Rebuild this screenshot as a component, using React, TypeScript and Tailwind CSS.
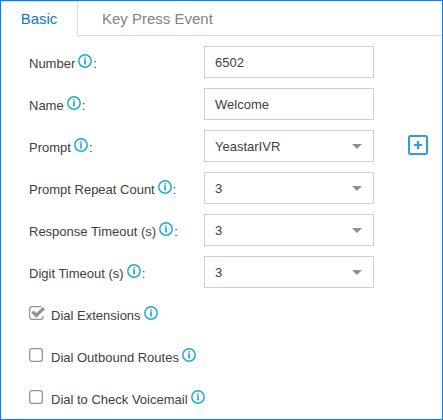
import React from "react";

function InfoIcon() {
  return (
    <svg className="mb-[2px] ml-[3px] h-[14px] w-[14px] shrink-0" viewBox="0 0 14 14" fill="none">
      <circle cx="7" cy="7" r="6.2" stroke="#22a9d6" strokeWidth="1.5" />
      <path d="M7 3.2v1.3M7 5.2v5.3" stroke="#22a9d6" strokeWidth="1.7" />
    </svg>
  );
}

type FieldProps = { label: string; value: string; select?: boolean; addable?: boolean };

function Field({ label, value, select, addable }: FieldProps) {
  return (
    <div className="flex h-8 items-center">
      <div className="flex w-[175px] shrink-0 items-center">
        <span className="pt-[3px]">{label}</span>
        <InfoIcon />
        <span className="ml-px pt-[3px]">:</span>
      </div>
      <div className="flex h-8 w-[170px] items-center justify-between border border-[#d0d0c9] pl-[10px] pr-[11px]">
        <span className="pt-[2px]">{value}</span>
        {select && (
          <svg className="mt-px h-[5px] w-[10px]" viewBox="0 0 10 5">
            <path d="M0 0h10L5 5z" fill="#918f89" />
          </svg>
        )}
      </div>
      {addable && (
        <svg className="mb-[3px] ml-[34px] h-5 w-5" viewBox="0 0 20 20" fill="none" stroke="#2f9fdc">
          <rect x="1" y="1" width="18" height="18" rx="1.5" strokeWidth="2" />
          <path d="M10 6v8M6 10h8" strokeWidth="2.2" />
        </svg>
      )}
    </div>
  );
}

function Option({ label, checked }: { label: string; checked?: boolean }) {
  return (
    <div className="flex h-8 items-center">
      <svg className="mb-[2px] mr-[6px] h-[14px] w-4 shrink-0" viewBox="0 0 16 14" fill="none" stroke="#96938d">
        {checked ? (
          <>
            <path d="M13.9 10v1.3a2 2 0 0 1-2 2H2.7a2 2 0 0 1-2-2V2.7a2 2 0 0 1 2-2h9.5" strokeWidth="1.2" />
            <path d="M3.4 5.6l3.9 3.9 7.5-7.4" strokeWidth="3.2" />
          </>
        ) : (
          <rect x=".7" y=".7" width="12.6" height="12.6" rx="2" strokeWidth="1.3" />
        )}
      </svg>
      <span className="pt-[3px]">{label}</span>
      <InfoIcon />
    </div>
  );
}

export default function App() {
  return (
    <div className="h-[420px] w-[443px] border border-[#0080ff] bg-white font-['Liberation_Sans',Arial,sans-serif] text-[13px] leading-4 text-[#404040]">
      <div className="flex h-[35px] text-[15px]">
        <div className="flex w-[77px] items-center justify-center border-r border-t border-[#dcdcdc] text-[#1177c0]">
          Basic
        </div>
        <div className="flex flex-1 items-center border-b border-[#dcdcdc] pl-6 pt-[2px] text-[#85827d]">Key Press Event</div>
      </div>
      <div className="flex flex-col gap-[10px] pl-7 pt-[10px]">
        <Field label="Number" value="6502" />
        <Field label="Name" value="Welcome" />
        <Field label="Prompt" value="YeastarIVR" select addable />
        <Field label="Prompt Repeat Count" value="3" select />
        <Field label="Response Timeout (s)" value="3" select />
        <Field label="Digit Timeout (s)" value="3" select />
        <Option label="Dial Extensions" checked />
        <Option label="Dial Outbound Routes" />
        <Option label="Dial to Check Voicemail" />
      </div>
    </div>
  );
}
